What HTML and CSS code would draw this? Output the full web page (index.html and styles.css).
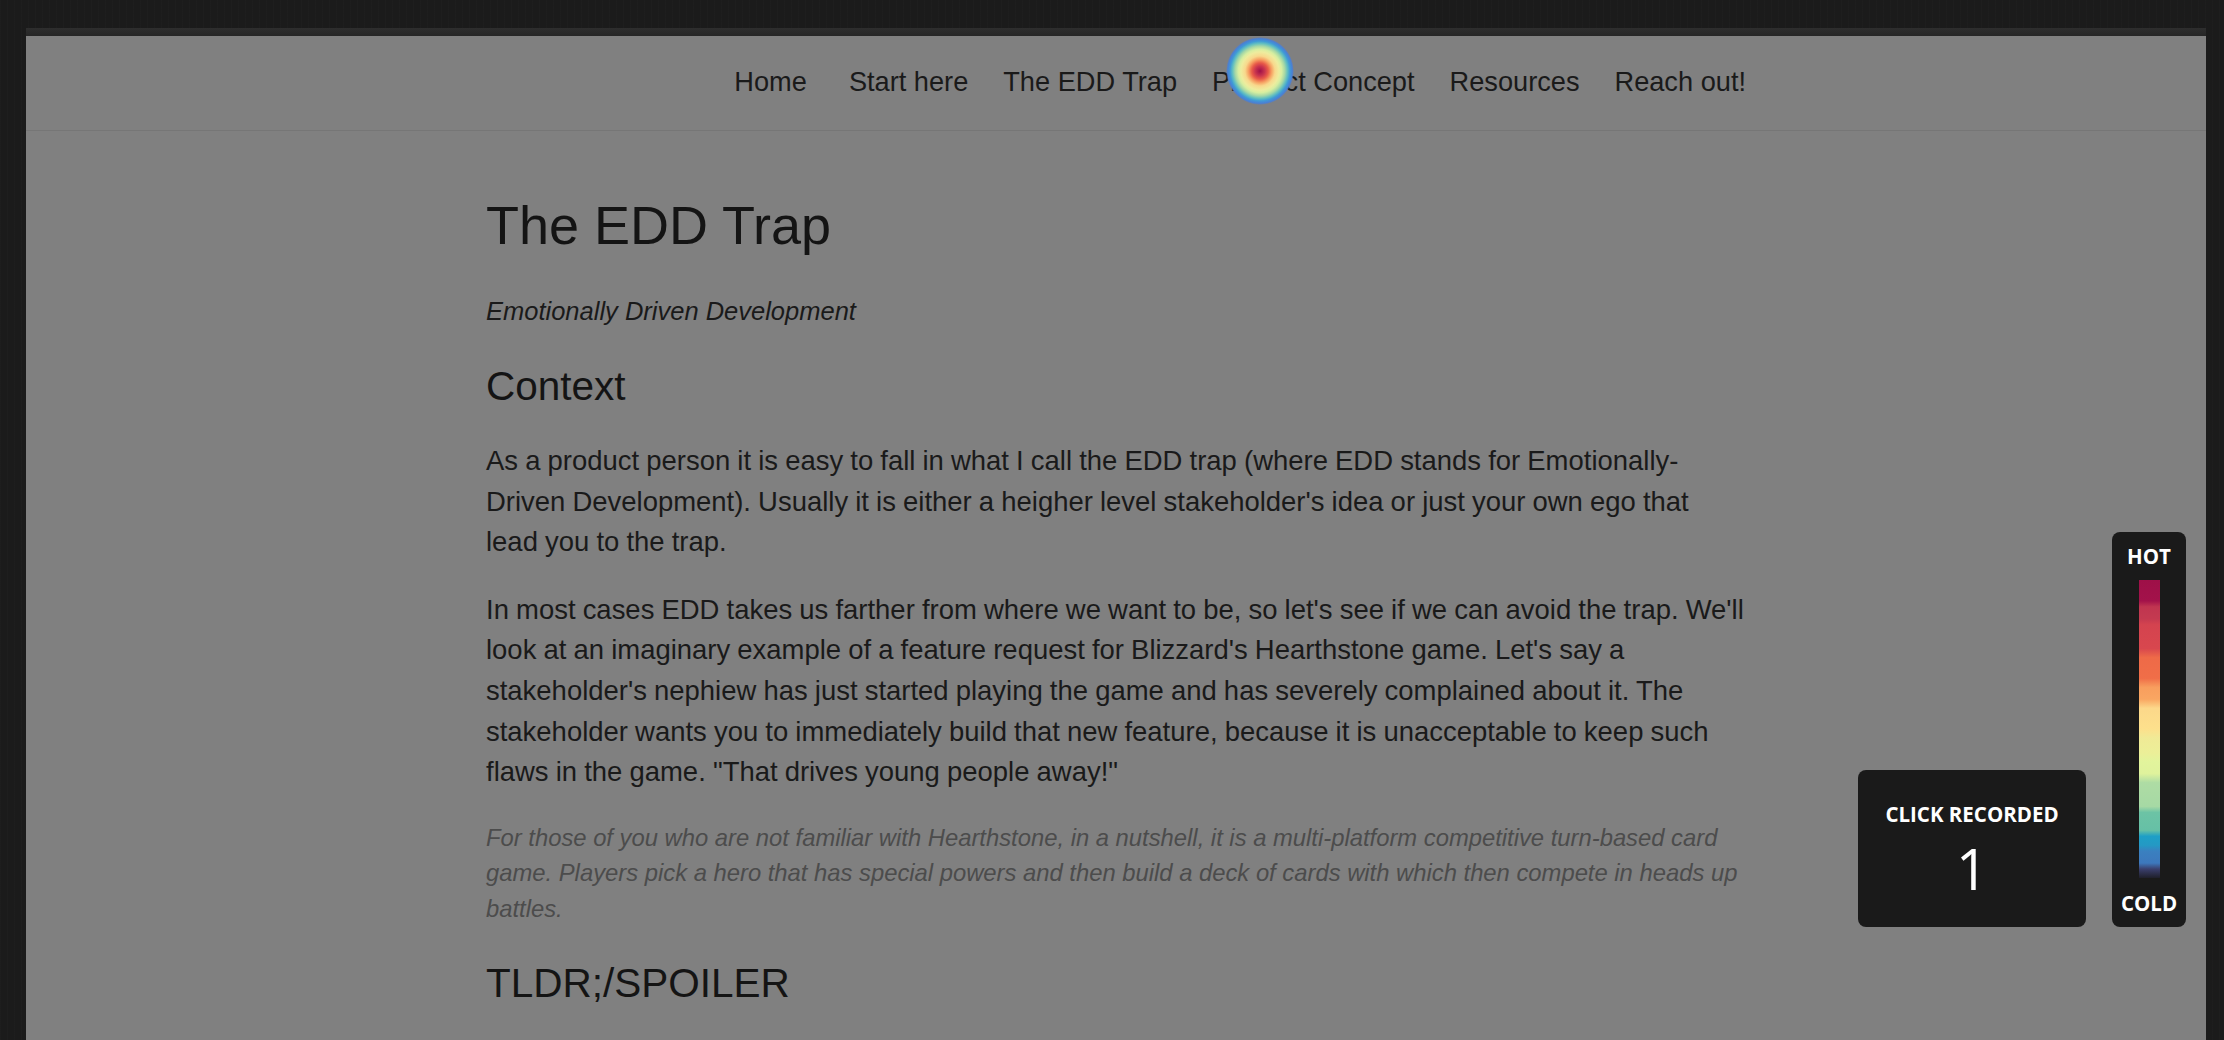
FILE: index.html
```html
<!DOCTYPE html>
<html lang="en">
<head>
<meta charset="utf-8">
<title>The EDD Trap – Heatmap</title>
<link rel="stylesheet" href="styles.css">
</head>
<body>
<div class="desk">
  <div class="window">
    <div class="window-bar"></div>
    <div class="page">
      <header class="site-header">
        <div class="container">
          <nav class="nav">
            <a class="nav-link nav-home" href="#">Home</a>
            <a class="nav-link" href="#">Start here</a>
            <a class="nav-link" href="#">The EDD Trap</a>
            <a class="nav-link" href="#">Product Concept</a>
            <a class="nav-link" href="#">Resources</a>
            <a class="nav-link" href="#">Reach out!</a>
          </nav>
        </div>
      </header>
      <main class="container article">
        <h1 class="title">The EDD Trap</h1>
        <p class="subtitle">Emotionally Driven Development</p>
        <h2 class="section section-first">Context</h2>
        <p class="text">As a product person it is easy to fall in what I call the EDD trap (where EDD stands for Emotionally-Driven Development). Usually it is either a heigher level stakeholder's idea or just your own ego that lead you to the trap.</p>
        <p class="text">In most cases EDD takes us farther from where we want to be, so let's see if we can avoid the trap. We'll look at an imaginary example of a feature request for Blizzard's Hearthstone game. Let's say a stakeholder's nephiew has just started playing the game and has severely complained about it. The stakeholder wants you to immediately build that new feature, because it is unacceptable to keep such flaws in the game. "That drives young people away!"</p>
        <p class="note">For those of you who are not familiar with Hearthstone, in a nutshell, it is a multi-platform competitive turn-based card game. Players pick a hero that has special powers and then build a deck of cards with which then compete in heads up battles.</p>
        <h2 class="section section-tight">TLDR;/SPOILER</h2>
        <p class="text">If you do not have time to read the whole story, here is the short version: validate the idea with real players before you build anything at all.</p>
      </main>
    </div>
  </div>
</div>

<span class="heat-spot"></span>

<div class="widgets">
  <div class="click-card">
    <div class="click-label">CLICK RECORDED</div>
    <div class="click-count">1</div>
  </div>
  <div class="legend">
    <div class="legend-label">HOT</div>
    <div class="legend-bar"></div>
    <div class="legend-label">COLD</div>
  </div>
</div>
</body>
</html>
```

FILE: styles.css
```css
* {
  box-sizing: border-box;
}

html, body {
  margin: 0;
  padding: 0;
  height: 100%;
}

body {
  background: #1b1b1b;
  overflow: hidden;
  position: relative;
  font-family: "Liberation Sans", Arial, sans-serif;
}

.desk {
  height: 100vh;
  padding: 28px 18px 0 26px;
  display: flex;
  flex-direction: column;
  background:
    repeating-linear-gradient(90deg, rgba(255,255,255,0.012) 0 1px, transparent 1px 7px),
    #1b1b1b;
}

.window {
  flex: 1;
  display: flex;
  flex-direction: column;
  min-height: 0;
}

.window-bar {
  height: 8px;
  background: linear-gradient(#2e2e2e, #262626);
}

.page {
  flex: 1;
  background: #808080;
  overflow: hidden;
}

.container {
  width: 1260px;
  margin: 0 auto;
}

.site-header {
  padding: 25.5px 0 28px;
  border-bottom: 1px solid #767676;
}

.nav {
  display: flex;
  justify-content: flex-end;
  gap: 35px;
}

.nav-link {
  font-size: 27.2px;
  line-height: 40.5px;
  color: #1a1a1a;
  text-decoration: none;
}

.nav-home {
  margin-right: 7px;
}

.article {
  padding-top: 62px;
  color: #1a1a1a;
}

.title {
  margin: 0 0 33.5px;
  font-size: 54px;
  line-height: 65px;
  font-weight: normal;
  color: #141414;
}

.subtitle {
  margin: 0 0 32px;
  font-size: 25.5px;
  line-height: 38px;
  font-style: italic;
  color: #1a1a1a;
}

.section {
  margin: 32px 0 32px;
  font-size: 40.5px;
  line-height: 49px;
  font-weight: normal;
  color: #141414;
}

.section-first {
  margin-bottom: 30.5px;
}

.section-tight {
  margin-top: 32.5px;
  margin-bottom: 30px;
}

.text {
  margin: 0 0 26.5px;
  font-size: 27.46px;
  line-height: 40.7px;
  word-spacing: -0.5px;
}

.note {
  margin: 0 0 26.5px;
  font-size: 23.8px;
  line-height: 35.5px;
  font-style: italic;
  color: #4c4c4c;
}

/* heatmap overlay */
.heat-spot {
  position: absolute;
  left: 1226px;
  top: 37px;
  width: 68px;
  height: 68px;
  border-radius: 50%;
  background: radial-gradient(circle closest-side,
    #9e1048 0%,
    #c8344e 14%,
    #e85a48 24%,
    #f6a062 34%,
    #f8d88c 44%,
    #eeec9e 56%,
    #d7eea0 64%,
    #a6d8a6 73%,
    #62bfc0 81%,
    #3f9ad6 88%,
    #4a7fd4 95%,
    rgba(74,127,212,0) 100%);
}

.widgets {
  position: absolute;
  right: 38px;
  bottom: 113px;
  display: flex;
  align-items: flex-end;
  gap: 26px;
  font-family: "Open Sans", "Noto Sans", sans-serif;
  color: #ffffff;
}

.click-card {
  width: 228px;
  height: 157px;
  background: #1a1a1a;
  border-radius: 8px;
  padding-top: 32px;
  display: flex;
  flex-direction: column;
  align-items: center;
  gap: 14px;
}

.click-label {
  font-size: 20.5px;
  line-height: 24px;
  font-weight: 700;
}

.click-count {
  font-size: 56px;
  line-height: 56px;
  font-weight: 400;
}

.legend {
  width: 74px;
  height: 395px;
  background: #1a1a1a;
  border-radius: 8px;
  padding: 12px 0 11.5px;
  display: flex;
  flex-direction: column;
  align-items: center;
}

.legend-label {
  font-size: 20.5px;
  line-height: 24px;
  font-weight: 700;
}

.legend-bar {
  width: 21px;
  height: 298px;
  margin: 11.5px 0 13.5px;
  background: linear-gradient(to bottom,
    #9e1048 0%,
    #a3124a 7%,
    #c03550 9%,
    #c43a50 13%,
    #d4434f 15%,
    #d8474e 23%,
    #ee6a48 26%,
    #f06e48 33%,
    #f89e5e 36%,
    #f9a662 40%,
    #fcd88a 43%,
    #fde08c 50%,
    #f0ea96 53%,
    #ecef98 58%,
    #e2f49c 61%,
    #dff29c 65%,
    #aedca4 68%,
    #a6d9a4 76%,
    #6cc3a5 78%,
    #66c0a6 84%,
    #1e9fc6 86%,
    #2499c4 89%,
    #3a80c0 91%,
    #3d78bc 95%,
    #3a3f6c 97%,
    #1f1f2a 100%);
}
```
